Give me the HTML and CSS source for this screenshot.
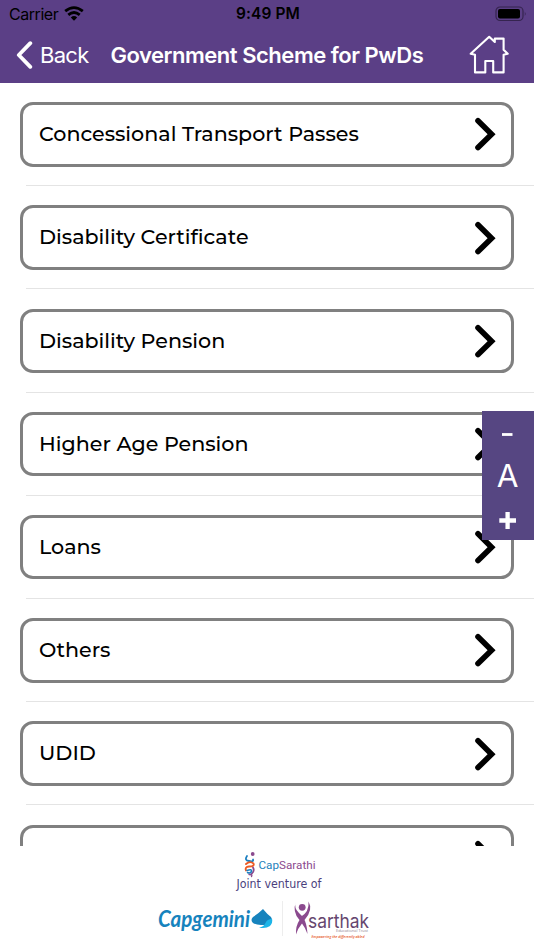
FILE: index.html
```html
<!DOCTYPE html>
<html lang="en">
<head>
    <meta charset="UTF-8">
    <meta name="viewport" content="width=device-width, initial-scale=1.0">
    <title>Government Scheme for PwDs</title>
    <link rel="stylesheet" href="styles.css">
</head>
<body>
    <svg class="defs" width="0" height="0">
        <symbol id="chevron" viewBox="0 0 22 34">
            <path d="M4 3.8 L17.6 17.2 L4 30.600" fill="none" stroke="#000" stroke-width="5.6" stroke-linecap="round"/>
        </symbol>
    </svg>

    <header class="header">
        <div class="status-bar">
            <div class="carrier">
                <span class="carrier-name">Carrier</span>
                <svg width="20" height="15" viewBox="0 0 20 15" fill="none" stroke="#000" stroke-width="2.8">
                    <path d="M1.2 5.2 Q10 -2 18.8 5.2"/>
                    <path d="M4.3 8.9 Q10 4.2 15.7 8.9"/>
                    <path d="M6.8 11.5 Q10 8.6 13.2 11.5 L10 14.8 Z" fill="#000" stroke="none"/>
                </svg>
            </div>
            <span class="time">9:49 PM</span>
            <div class="battery">
                <svg width="32" height="16" viewBox="0 0 32 16">
                    <rect x="1" y="1" width="27" height="13.5" rx="4" fill="none" stroke="#35244f" stroke-width="1.2"/>
                    <rect x="3" y="3" width="22" height="9.6" rx="2"/>
                    <path d="M29.8 5.5 Q31.5 7.8 29.8 10 Z" fill="#35244f"/>
                </svg>
            </div>
        </div>
        <nav class="nav-bar">
            <a class="back">
                <svg width="17" height="28" viewBox="0 0 17 28">
                    <path d="M14.3 2.2 L2.8 14 L14.3 25.8" fill="none" stroke="#fff" stroke-width="3.8" stroke-linecap="round" stroke-linejoin="round"/>
                </svg>
                <span>Back</span>
            </a>
            <h1>Government Scheme for PwDs</h1>
            <svg class="home" width="40" height="40" viewBox="0 0 40 40">
                <path d="M1.7 18.8 L20.2 1.8 L25.8 7 V3.6 H34.6 V14.7 L38.7 18.8 L34.6 19.7 V37.4 H24.2 V26 H16.3 V37.4 H6 V19.7 Z" fill="none" stroke="#fff" stroke-width="2.1" stroke-linejoin="round"/>
            </svg>
        </nav>
    </header>

    <main class="list">
        <div class="row"><div class="card"><span>Concessional Transport Passes</span><svg class="chevron"><use href="#chevron"/></svg></div></div>
        <div class="row"><div class="card"><span>Disability Certificate</span><svg class="chevron"><use href="#chevron"/></svg></div></div>
        <div class="row"><div class="card"><span>Disability Pension</span><svg class="chevron"><use href="#chevron"/></svg></div></div>
        <div class="row"><div class="card"><span>Higher Age Pension</span><svg class="chevron"><use href="#chevron"/></svg></div></div>
        <div class="row"><div class="card"><span>Loans</span><svg class="chevron"><use href="#chevron"/></svg></div></div>
        <div class="row"><div class="card"><span>Others</span><svg class="chevron"><use href="#chevron"/></svg></div></div>
        <div class="row"><div class="card"><span>UDID</span><svg class="chevron"><use href="#chevron"/></svg></div></div>
        <div class="row"><div class="card"><span></span><svg class="chevron"><use href="#chevron"/></svg></div></div>
    </main>

    <div class="font-size">
        <svg width="52" height="129" viewBox="0 0 52 129">
            <path d="M20 23.5 H30.5" stroke="#fff" stroke-width="2.8"/>
            <text x="25.5" y="76" text-anchor="middle" class="font-letter">A</text>
            <path d="M17.3 109.5 H34 M25.6 101 V118" stroke="#fff" stroke-width="4.3"/>
        </svg>
    </div>

    <footer class="footer">
        <svg width="220" height="104" viewBox="0 0 220 104">
            <!-- CapSarathi -->
            <circle cx="97.7" cy="8" r="1.9" fill="#8b4a8e"/>
            <g fill="none" stroke-linecap="round">
                <path d="M92 10 Q89 14.5 94 15 Q99 16 98 13.5" stroke="#1b7fc0" stroke-width="1.8"/>
                <path d="M91 18 Q95 14.5 98.5 17.5 Q100 20.5 94 20.5 Q89.5 21 91 24.5" stroke="#ee5a24" stroke-width="1.9"/>
                <path d="M98 21.5 Q100 25 96.500 28" stroke="#8b4a8e" stroke-width="1.8"/>
                <path d="M92 24.500 Q97 22.500 96.500 25.500 Q95 28 92.5 26.5" stroke="#1b7fc0" stroke-width="1.5"/>
                <path d="M94 28.500 Q98 28.500 96.500 30.500" stroke="#8b4a8e" stroke-width="1.3"/>
            </g>
            <text x="103.5" y="23" class="capsarathi" textLength="57" lengthAdjust="spacingAndGlyphs"><tspan fill="#1e7fbb">Cap</tspan><tspan fill="#8b4a8e">Sarathi</tspan></text>
            <text x="81.5" y="42" class="joint" textLength="85" lengthAdjust="spacingAndGlyphs">Joint venture of</text>

            <!-- Capgemini -->
            <text x="3" y="80.5" class="capgemini" textLength="92" lengthAdjust="spacingAndGlyphs">Capgemini</text>
            <path d="M108 63 Q112 68 116 71 C118 74 117 79 113 79 H106 Q101 79 98 77 Q95 74 98 71 Q104 67 108 63 Z" fill="#1683bd"/>
            <path d="M117 72.5 C114 74 113 73 111 76 Q109 81 104 81.7 Q111 83 115 80 Q118 76.5 117 72.5 Z" fill="#1cb5e8"/>
            <path d="M127.5 55 V90" stroke="#ededed"/>

            <!-- Sarthak -->
            <circle cx="147.2" cy="61.3" r="3.4" fill="#8b4a8e"/>
            <path d="M141 55.500 Q138.500 62 144 67 Q148 70 150 75 Q152 80 152.500 88 Q150.500 82 147 77.500 Q143 82 141 88.500 Q140.500 80 144.500 74 Q137 66 141 55.500 Z M153.500 55.500 Q158.500 64 149.500 74 L145.500 71 Q154.500 66 153.500 55.500 Z" fill="#8b4a8e"/>
            <text x="153" y="82" class="sarthak" textLength="61" lengthAdjust="spacingAndGlyphs">sarthak</text>
            <text x="181" y="86.3" class="sub" fill="#8d8291" textLength="32" lengthAdjust="spacingAndGlyphs">Educational Trust</text>
            <text x="156.5" y="91.7" class="tagline" fill="#e65022" textLength="53" lengthAdjust="spacingAndGlyphs">Empowering the differently abled</text>
        </svg>
    </footer>
</body>
</html>
```

FILE: styles.css
```css
* {
    box-sizing: border-box;
}

body {
    margin: 0;
    width: 534px;
    height: 950px;
    overflow: hidden;
    display: flex;
    flex-direction: column;
    background: #fff;
    font-family: Inter, 'Liberation Sans', sans-serif;
    position: relative;
}

.defs {
    position: absolute;
}

.header {
    height: 83px;
    flex: none;
    background: #5b3f86;
}

.status-bar {
    height: 27px;
    padding: 0 7px 0 9px;
    display: grid;
    grid-template-columns: 1fr auto 1fr;
    align-items: center;
    font-size: 16px;
    color: #000;
}

.carrier {
    display: flex;
    align-items: center;
    gap: 6px;
}

.carrier-name {
    letter-spacing: -0.45px;
}

.time {
    font-weight: 600;
    font-size: 15.5px;
    letter-spacing: 0.1px;
}

.battery {
    display: flex;
    justify-content: flex-end;
}

.nav-bar {
    height: 55px;
    padding: 0 25px 0 16px;
    display: flex;
    align-items: center;
    color: #fff;
}

.back {
    width: 94.5px;
    display: flex;
    align-items: center;
    gap: 7px;
    font-size: 22px;
    letter-spacing: -0.7px;
}

h1 {
    margin: 0;
    font-size: 22px;
    font-weight: 600;
    letter-spacing: -0.48px;
    white-space: nowrap;
}

.home {
    margin-left: auto;
}

.list {
    height: 763px;
    flex: none;
    overflow: hidden;
}

.row {
    height: 103.2px;
    margin-left: 26px;
    padding: 19.2px 20px 0 0;
    border-bottom: 1px solid #e4e4e4;
}

.card {
    height: 64.5px;
    margin-left: -6px;
    padding: 0 15px 0 16px;
    border: 3px solid #808080;
    border-radius: 13px;
    display: flex;
    align-items: center;
    justify-content: space-between;
    font-family: Montserrat, Inter, sans-serif;
    font-size: 20.65px;
    font-weight: 500;
    color: #000;
}

.card span {
    padding-bottom: 1.5px;
}

.chevron {
    width: 22px;
    height: 34px;
}

.font-size {
    position: absolute;
    top: 410.5px;
    right: 0;
    width: 52px;
    height: 129px;
    background: #564682;
}

.font-letter {
    font-size: 31.5px;
    font-weight: 400;
    fill: #fff;
}

.footer {
    height: 104px;
    flex: none;
    padding-left: 155px;
    background: #fff;
}

.footer svg {
    display: block;
    overflow: visible;
}

.capsarathi {
    font-family: Roboto, sans-serif;
    font-size: 11.5px;
}

.joint {
    font-family: 'DejaVu Sans', sans-serif;
    font-size: 11.5px;
    fill: #4b3f7d;
}

.capgemini {
    font-family: Lato, sans-serif;
    font-size: 23px;
    font-weight: 700;
    font-style: italic;
    fill: #1683bd;
}

.sarthak {
    font-family: Inter, sans-serif;
    font-size: 19px;
    font-weight: 400;
    fill: #66466e;
}

.sub,
.tagline {
    font-family: 'Open Sans', sans-serif;
    font-size: 3.8px;
}

.tagline {
    font-weight: 600;
    font-style: italic;
}
```
